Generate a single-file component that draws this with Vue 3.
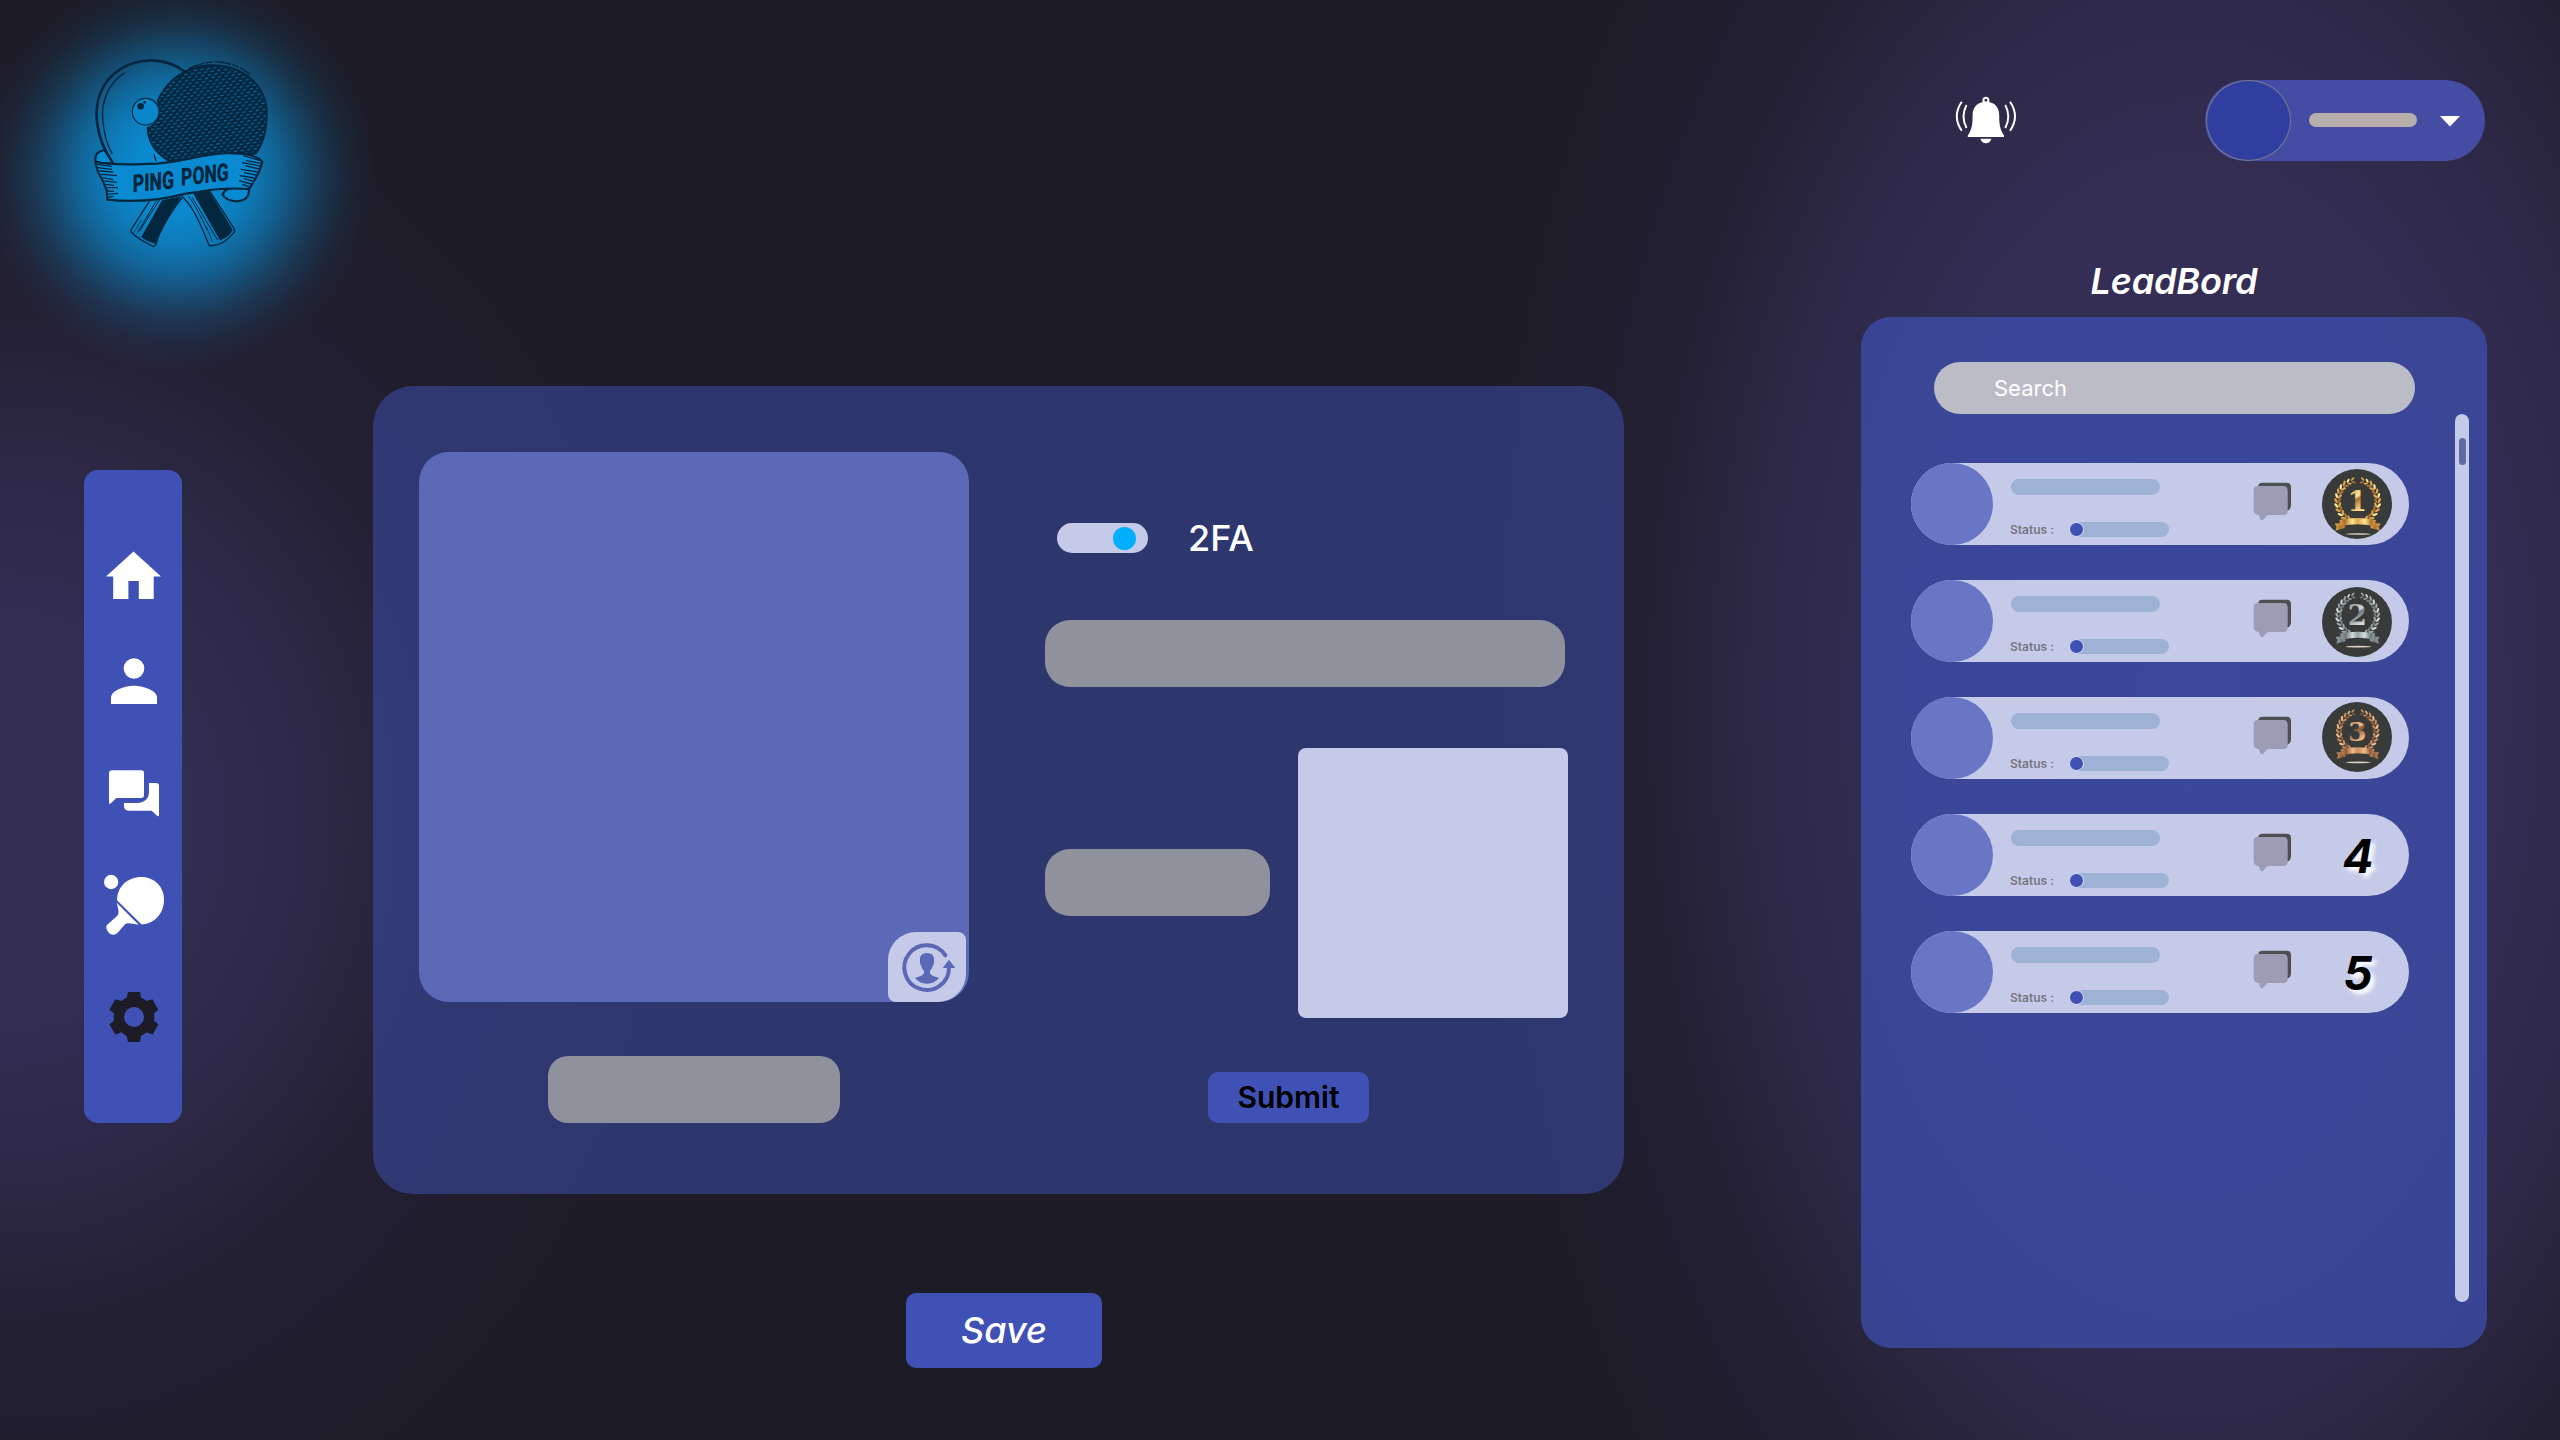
<script setup>
const laurel = []
for (let i = 0; i <= 11; i++) {
  const deg = 118 + i * 12.6
  const a = (deg * Math.PI) / 180
  const x = 107 + 60 * Math.cos(a)
  const y = 96 + 63 * Math.sin(a)
  const tangent = deg + 90
  const size = i > 9 ? 0.8 : 1
  laurel.push({ x: x + 5 * Math.cos(a), y: y + 5 * Math.sin(a), r: tangent - 32, s: size })
  laurel.push({ x: x - 5 * Math.cos(a), y: y - 5 * Math.sin(a), r: tangent + 32, s: size })
}

const players = [
  { rank: 1, medal: { id: 'gold', dark: '#b0702c', mid: '#dda54c', light: '#ffe994', s: 1, ty: 0, line: 195, dy: -0.5 } },
  { rank: 2, medal: { id: 'silver', dark: '#6f7a7c', mid: '#98a3a4', light: '#d3dada', s: 0.957, ty: -6.6, line: 179, dy: 1 } },
  { rank: 3, medal: { id: 'bronze', dark: '#8f5a37', mid: '#c98f60', light: '#f2bb88', s: 0.93, ty: -0.8, line: 181, dy: -1 } },
  { rank: 4 },
  { rank: 5 },
]
</script>

<template>
  <div class="page">
    <aside class="left">
      <div class="logo">
        <svg viewBox="270 170 540 582" width="180" height="194">
          <defs>
            <pattern id="dots" width="20" height="19" patternUnits="userSpaceOnUse" patternTransform="rotate(-7)">
              <path d="M1 5l3-3h7v3H5l-1 2z M11 14.500l3-3h7v3h-6l-1 2z M-9 14.500l3-3h7v3h-6l-1 2z" fill="#0a7dbb" />
            </pattern>
          </defs>
          <g fill="none" stroke="#03263f" stroke-linecap="round" stroke-linejoin="round">
            <path d="M552 213C505 175 425 168 365 204C305 240 284 300 291 365C296 410 312 450 338 488" stroke-width="8" />
            <path d="M373 218C325 250 304 300 308 355C311 400 322 435 336 460" stroke-width="4" />
            <path d="M365 222C335 246 318 275 312 310" stroke-width="3" />
            <path d="M455 592L392 690Q398 708 460 739L468 733L474 710Q500 650 548 590" stroke-width="4" />
            <path d="M478 600L420 690M470 600L412 698" stroke-width="3" />
            <path d="M424 660L402 696" stroke-width="2" />
            <path d="M548 590Q575 615 600 670L628 736Q668 740 704 694L702 684L628 570" stroke-width="4" />
            <path d="M577 592L652 718M566 588Q590 620 622 690" stroke-width="3" />
            <path d="M620 680L636 722" stroke-width="2" />
          </g>
          <path d="M486 600L545 588Q500 650 468 730Q440 724 424 710Z" fill="#03263f" />
          <path d="M580 580L626 570L698 688Q690 708 660 720Z" fill="#03263f" />
          <path d="M440 380Q474 372 478 325L470 302C500 235 565 190 640 192C740 194 800 260 803 330C804 385 795 425 770 462L505 484C465 460 440 425 440 380Z" fill="#03263f" />
          <path d="M445 382Q474 372 480 325L476 302C505 240 570 197 640 198C735 200 795 262 798 330C798 385 790 420 768 455L510 478C470 456 445 425 445 382Z" fill="url(#dots)" />
          <path d="M566 205Q610 182 660 185Q715 192 750 222M490 270Q510 240 540 222M462 462L468 482" fill="none" stroke="#03263f" stroke-width="4" stroke-dasharray="50 4 22 4" />
          <circle cx="437" cy="334" r="40" fill="#0a87ca" stroke="#03263f" stroke-width="3.500" />
          <circle cx="422" cy="318" r="10" fill="#03263f" />
          <circle cx="434" cy="306" r="4" fill="#03263f" />
          <g fill="#0a8bd1" stroke="#03263f" stroke-width="6.500" stroke-linejoin="round">
            <path d="M338 488L313 449Q284 455 286 478L289 490Z" />
            <path d="M668 584Q672 562 710 562L747 566Q748 602 710 603Q680 602 668 584Z" />
            <path d="M286 484Q330 496 470 490C560 484 620 455 700 459Q765 460 787 484Q780 515 760 545L748 566C660 560 610 572 548 582C480 600 400 606 322 598L320 570Q310 540 294 515Z" />
          </g>
          <path d="M290 492l45 6M294 502l42 5M298 512l42 3M303 522l48 4M308 532l32 6M313 542l38 4M316 552l26 3M320 562l34 0M320 572l22 1M320 582l34-3M322 591l18-3M785 482l-55-16M784 489l-46-8M782 497l-56-10M778 506l-42-10M774 515l-52-8M768 524l-36-7M763 533l-44-7M758 542l-26-7M753 551l-36-10M749 560l-22-8" stroke="#03263f" stroke-width="4" fill="none" />
          <g class="ribbon-text" fill="#03263f">
            <text transform="matrix(1 -0.100 0 1 398 576)" textLength="124" lengthAdjust="spacingAndGlyphs">PING</text>
            <text transform="matrix(1 -0.120 0 1 543 557)" textLength="143" lengthAdjust="spacingAndGlyphs">PONG</text>
          </g>
        </svg>
      </div>
      <nav class="sidebar">
        <svg viewBox="84 513 98 112"><path d="M133.500 551.500L161 576.400H153.700V599H138.800V581H128.400V599H113.200V576.400H106Z" fill="#fff" /></svg>
        <svg viewBox="84 625 98 112"><circle cx="134" cy="668.500" r="10.300" fill="#fff" /><path d="M111 704v-6.500C111 690 126 685.700 134 685.700s23 4.300 23 11.800v6.500z" fill="#fff" /></svg>
        <svg viewBox="-33 -69 294 336"><path d="M51 31H139Q147 31 147 39V105Q147 114 138 114H64L46 131Q42 132 42 128V40Q42 31 51 31ZM162 69H183Q192 69 192 78V166Q191 170 187 168L170 152H99Q87 150 87 138V129H126Q162 128 162 94Z" fill="#fff" /></svg>
        <svg viewBox="-33 267 294 336"><g fill="#fff"><circle cx="48.500" cy="366" r="21.500" /><path d="M66 421C66 380 98 351 139 351C178 351 207 380 207 419C207 460 178 492 139 493Z" /><path d="M65 428L131 494C114 492 98 486 90 493L68 518Q58 529 44 521Q30 508 35 496L67 467C75 458 68 442 65 428Z" /></g></svg>
        <svg viewBox="-33 603 294 336"><path fill-rule="evenodd" d="M99 696H135L138 713Q147 716 154 723L172 718L190 749L177 760Q179 771 177 782L190 793L173 824L154 817Q147 824 138 828L135 846H99L95 828Q86 824 80 817L61 824L43 793L57 782Q55 771 57 760L43 749L61 718L80 723Q86 716 95 713ZM117 741A30 30 0 1 0 117 801A30 30 0 1 0 117 741Z" fill="#1c1b26" /></svg>
      </nav>
    </aside>

    <main class="center">
      <section class="card">
        <div class="avatar-col">
          <div class="avatar">
            <button class="change">
              <svg viewBox="84 93 234 210" width="78" height="70">
                <path d="M256 163A67 67 0 1 0 267 200" fill="none" stroke="#5b68b6" stroke-width="12" stroke-linecap="round" />
                <path d="M267 176L286 201H248Z" fill="#5b68b6" />
                <path d="M201 156C216 156 223 165 222 176Q224 188 219 194Q215 204 210 210Q208 220 218 224L237 231Q224 248 201 248Q178 248 165 231L184 224Q194 220 192 210Q187 204 183 194Q178 188 180 176C179 165 186 156 201 156Z" fill="#5b68b6" />
              </svg>
            </button>
          </div>
          <div class="field name"></div>
        </div>
        <div class="form-col">
          <div class="twofa"><span class="toggle"><i></i></span><span class="twofa-label">2FA</span></div>
          <div class="field long"></div>
          <div class="code-row">
            <div class="field code"></div>
            <div class="qr"></div>
          </div>
          <button class="submit">Submit</button>
        </div>
      </section>
      <button class="save">Save</button>
    </main>

    <aside class="right">
      <header class="topbar">
        <svg class="bell" viewBox="1955 96 62 48" width="62" height="48">
          <circle cx="1985.900" cy="100.300" r="2.500" fill="none" stroke="#fff" stroke-width="2" />
          <path d="M1985.900 101.800C1994 101.800 1999.200 107 1999.200 115C1999.200 125 2000 129 2004 135.500V137H1967.800V135.500C1972 129 1972.600 125 1972.600 115C1972.600 107 1978 101.800 1985.900 101.800Z" fill="#fff" />
          <path d="M1980.400 138.800H1991.400Q1990 143.300 1985.900 143.300T1980.400 138.800Z" fill="#fff" />
          <path d="M1966.500 105Q1960.500 116.500 1966.500 128M1961.800 101.700Q1951.800 116.200 1961.800 130.800M2005.300 105Q2011.300 116.500 2005.300 128M2010 101.700Q2020 116.200 2010 130.800" fill="none" stroke="#fff" stroke-width="2" />
        </svg>
        <div class="profile">
          <span class="me"></span>
          <span class="me-name"></span>
          <svg class="caret" width="20" height="11" viewBox="0 0 20 11"><path d="M0 0H20L10 10.500Z" fill="#fff" /></svg>
        </div>
      </header>
      <h1>LeadBord</h1>
      <section class="board">
        <div class="board-main">
          <div class="search">Search</div>
          <div v-for="p in players" :key="p.rank" class="row">
            <span class="face"></span>
            <div class="info">
              <div class="info-name"></div>
              <div class="status"><span>Status :</span><div class="status-bar"><i></i></div></div>
            </div>
            <svg class="chat" viewBox="0 0 117 117" width="39" height="39">
              <path d="M15 16Q15 2 28 2H101Q114 2 114 15V70Q114 82 102 87V30Q102 14 88 14H15Z" fill="#4d4f50" />
              <path d="M14 12H91Q104 12 104 25V86Q104 99 91 99H44L30 113Q25 117 22 112L17 99Q2 97 2 84V25Q2 12 14 12Z" fill="#9c9db4" />
            </svg>
            <div v-if="!p.medal" class="rank">{{ p.rank }}</div>
            <svg v-else class="medal" :style="{ top: p.medal.dy + 'px' }" viewBox="0 0 210 210" width="70" height="70">
              <defs>
                <linearGradient :id="p.medal.id" x1="0" y1="0" x2="1" y2="0">
                  <stop offset="0" :stop-color="p.medal.mid" />
                  <stop offset="0.150" :stop-color="p.medal.dark" />
                  <stop offset="0.350" :stop-color="p.medal.light" />
                  <stop offset="0.500" :stop-color="p.medal.mid" />
                  <stop offset="0.700" :stop-color="p.medal.light" />
                  <stop offset="0.870" :stop-color="p.medal.dark" />
                  <stop offset="1" :stop-color="p.medal.mid" />
                </linearGradient>
                <linearGradient :id="p.medal.id + '-v'" x1="0" y1="0" x2="0.300" y2="1">
                  <stop offset="0.200" :stop-color="p.medal.mid" />
                  <stop offset="0.450" :stop-color="p.medal.light" />
                  <stop offset="0.550" :stop-color="p.medal.dark" />
                  <stop offset="0.900" :stop-color="p.medal.light" />
                </linearGradient>
              </defs>
              <circle cx="105" cy="105" r="105" fill="#393b3a" />
              <g :transform="`translate(${107 - 107 * p.medal.s} ${p.medal.ty}) scale(${p.medal.s})`">
                <g v-for="side in [1, -1]" :key="side" :transform="side === 1 ? '' : 'translate(214 0) scale(-1 1)'">
                  <ellipse
                    v-for="(l, i) in laurel"
                    :key="i"
                    rx="8.500"
                    ry="3.600"
                    :fill="i % 4 === 0 ? p.medal.light : i % 4 === 3 ? p.medal.dark : p.medal.mid"
                    :transform="`translate(${l.x} ${l.y}) rotate(${l.r}) scale(${l.s})`"
                  />
                </g>
                <path d="M55 161L38 164L44 173L40 185Q54 180 68 177V162ZM159 161L176 164L170 173L174 185Q160 180 146 177V162Z" :fill="`url(#${p.medal.id})`" />
                <path d="M52 153Q107 141 162 153L156 172Q107 160 58 172Z" :fill="`url(#${p.medal.id})`" />
                <text class="digit" x="106" y="126" text-anchor="middle" :fill="`url(#${p.medal.id}-v)`">{{ p.rank }}</text>
              </g>
              <ellipse cx="109" :cy="p.medal.line" rx="38" ry="2.600" fill="#d8d0c0" />
            </svg>
          </div>
        </div>
        <div class="scroll"><i></i></div>
      </section>
    </aside>
  </div>
</template>

<style>
body {
  margin: 0;
  background: #1c1b26;
}
</style>

<style scoped>
.page {
  width: 2560px;
  height: 1440px;
  overflow: hidden;
  display: flex;
  font-family: Inter, "Liberation Sans", sans-serif;
  background:
    radial-gradient(ellipse 690px 790px at 10px 820px, #352f56 0%, #342e54 22%, rgba(50, 44, 80, 0.82) 42%, rgba(44, 39, 68, 0.42) 66%, rgba(28, 27, 38, 0) 100%),
    radial-gradient(ellipse 720px 1240px at 2190px 700px, #352f56 0%, #342e54 40%, rgba(50, 44, 80, 0.82) 58%, rgba(44, 39, 68, 0.4) 78%, rgba(28, 27, 38, 0) 100%),
    #1c1b26;
}
button {
  border: 0;
  padding: 0;
  font-family: inherit;
}
.left {
  width: 373px;
  flex: none;
  display: flex;
  flex-direction: column;
}
.logo {
  position: relative;
  width: 180px;
  height: 194px;
  margin: 57px 0 0 90px;
}
.logo::before {
  content: "";
  position: absolute;
  left: -112px;
  top: -85px;
  width: 400px;
  height: 400px;
  background: radial-gradient(closest-side, rgba(9, 146, 220, 0.95) 0%, rgba(9, 146, 220, 0.92) 20%, rgba(9, 146, 220, 0.8) 36%, rgba(9, 146, 220, 0.6) 50%, rgba(9, 146, 220, 0.39) 62%, rgba(9, 146, 220, 0.19) 74%, rgba(9, 146, 220, 0.07) 86%, rgba(9, 146, 220, 0) 100%);
}
.logo svg {
  position: relative;
  display: block;
}
.ribbon-text {
  font: 900 74px Roboto, "Liberation Sans", sans-serif;
}
.sidebar {
  width: 98px;
  height: 653px;
  box-sizing: border-box;
  margin: 219px 0 0 84px;
  padding-top: 43px;
  border-radius: 14px;
  background: #3f51b5;
  display: flex;
  flex-direction: column;
}
.sidebar svg {
  display: block;
  width: 98px;
  height: 112px;
}
.center {
  width: 1251px;
  flex: none;
  display: flex;
  flex-direction: column;
}
.card {
  margin-top: 385.5px;
  height: 808px;
  border-radius: 40px;
  background: rgba(63, 81, 181, 0.5);
  display: flex;
}
.avatar-col {
  margin: 66px 0 0 46px;
  width: 550px;
  display: flex;
  flex-direction: column;
  align-items: center;
}
.avatar {
  width: 550px;
  height: 550px;
  border-radius: 30px;
  background: #5c69b7;
  display: flex;
  align-items: flex-end;
  justify-content: flex-end;
}
.change {
  width: 78px;
  height: 70px;
  margin-right: 3px;
  border-radius: 28px 8px 28px 8px;
  background: #c5cae9;
}
.change svg {
  display: block;
}
.field {
  background: #8f919c;
}
.name {
  width: 292px;
  height: 67px;
  margin-top: 54px;
  border-radius: 20px;
}
.form-col {
  margin: 137.5px 0 0 76px;
  width: 523px;
  display: flex;
  flex-direction: column;
}
.twofa {
  display: flex;
  align-items: center;
  height: 30px;
  margin-left: 12px;
}
.toggle {
  width: 91px;
  height: 30px;
  box-sizing: border-box;
  padding-right: 12px;
  border-radius: 15px;
  background: #c5cae9;
  display: flex;
  align-items: center;
  justify-content: flex-end;
}
.toggle i {
  width: 23px;
  height: 23px;
  border-radius: 50%;
  background: #00b0ff;
}
.twofa-label {
  margin-left: 40px;
  color: #fff;
  font-size: 36px;
  font-weight: 500;
  line-height: 30px;
}
.long {
  width: 520px;
  height: 67px;
  margin-top: 66.5px;
  border-radius: 25px;
}
.code-row {
  display: flex;
  align-items: center;
  justify-content: space-between;
  height: 270px;
  margin-top: 61px;
}
.code {
  width: 225px;
  height: 67px;
  border-radius: 25px;
}
.qr {
  width: 270px;
  height: 270px;
  border-radius: 8px;
  background: #c5cae9;
}
.submit {
  width: 161px;
  height: 51px;
  margin: 54px 0 0 163px;
  border-radius: 10px;
  background: #3f51b5;
  color: #000;
  font-size: 30px;
  font-weight: 560;
}
.save {
  width: 196px;
  height: 75px;
  margin: 99px 0 0 533px;
  border-radius: 10px;
  background: #3f51b5;
  color: #fff;
  font-size: 36px;
  font-weight: 500;
  font-style: italic;
}
.right {
  width: 626px;
  flex: none;
  margin-left: 237px;
  display: flex;
  flex-direction: column;
}
.topbar {
  height: 81px;
  margin: 80px 2px 0 94px;
  display: flex;
  justify-content: space-between;
}
.bell {
  margin-top: 16px;
}
.profile {
  width: 280px;
  height: 81px;
  border-radius: 40px;
  background: #454ca3;
  display: flex;
  align-items: center;
}
.me {
  width: 85px;
  height: 81px;
  margin-left: 1px;
  box-sizing: border-box;
  border: 1px solid #77788c;
  border-radius: 50%;
  background: #303f9f;
}
.me-name {
  width: 108px;
  height: 14px;
  margin: 0 23px 1px 18px;
  border-radius: 7px;
  background: #b8aeab;
}
.caret {
  margin-bottom: -1px;
}
h1 {
  margin: 98px 0 0;
  height: 44px;
  line-height: 44px;
  text-align: center;
  color: #fff;
  font-size: 36px;
  font-weight: 600;
  font-style: italic;
  letter-spacing: -0.15px;
}
.board {
  margin-top: 14px;
  height: 1031px;
  border-radius: 30px;
  background: rgba(63, 81, 181, 0.7);
  display: flex;
}
.board-main {
  width: 498px;
  margin-left: 50px;
  display: flex;
  flex-direction: column;
}
.search {
  width: 481px;
  height: 52px;
  margin: 45px 0 49px 23px;
  box-sizing: border-box;
  padding-left: 60px;
  border-radius: 26px;
  background: #bcbcc7;
  color: #fff;
  font-size: 22px;
  line-height: 52px;
}
.row {
  height: 82px;
  flex: none;
  margin-bottom: 35px;
  border-radius: 41px;
  background: #c5cae9;
  display: flex;
}
.face {
  width: 82px;
  height: 82px;
  border-radius: 50%;
  background: #6976c5;
}
.info {
  width: 160px;
  margin: 16px 0 0 18px;
}
.info-name {
  width: 149px;
  height: 16px;
  border-radius: 8px;
  background: #9eb2d6;
}
.status {
  height: 15px;
  margin: 27px 0 0 -1px;
  display: flex;
  align-items: center;
}
.status span {
  width: 59px;
  color: #757780;
  font-size: 12px;
  font-weight: 600;
  line-height: 15px;
}
.status-bar {
  width: 100px;
  height: 15px;
  border-radius: 7.5px;
  background: #9eb2d6;
  display: flex;
}
.status-bar i {
  width: 15px;
  height: 15px;
  box-sizing: border-box;
  border: 1px solid #e2e5f5;
  border-radius: 50%;
  background: #3f51b5;
}
.chat {
  margin: 19px 0 0 82px;
}
.rank {
  width: 70px;
  margin-left: 31px;
  text-align: center;
  color: #000;
  font-size: 46px;
  font-weight: 700;
  font-style: italic;
  line-height: 84px;
  text-shadow: 4px 4px 4px #fff;
}
.medal {
  position: relative;
  margin: 6px 0 0 30px;
}
.digit {
  font: 700 86px "DejaVu Serif", serif;
}
.scroll {
  width: 14px;
  height: 888px;
  margin: 97px 0 0 46px;
  border-radius: 7px;
  background: #c5cae9;
}
.scroll i {
  display: block;
  width: 7px;
  height: 27px;
  margin: 24px auto 0;
  border-radius: 4px;
  background: #6169a3;
}
</style>
